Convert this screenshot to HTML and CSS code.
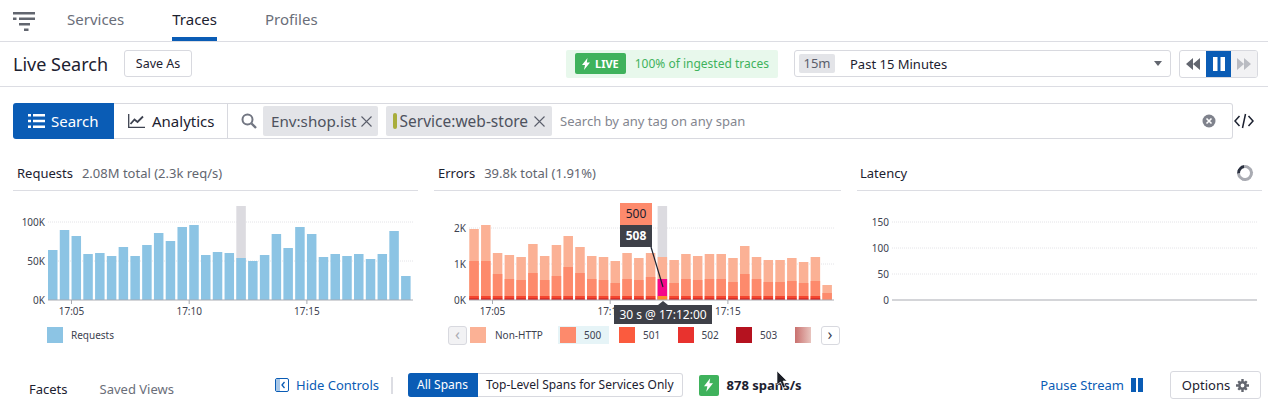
FILE: index.html
```html
<!DOCTYPE html>
<html lang="en">
<head>
  <meta charset="UTF-8">
  <title>Traces - Live Search</title>
  <link rel="stylesheet" href="styles.css">
</head>
<body>

  <nav class="tabs">
    <svg class="logo" width="22" height="20" viewBox="0 0 22 20">
      <rect x="0" y="0" width="22" height="2.5"/>
      <rect x="0" y="5.5" width="3.5" height="2.5"/>
      <rect x="6" y="5.5" width="16" height="2.5"/>
      <rect x="6" y="11" width="11" height="2.5"/>
      <rect x="11" y="16.5" width="4.5" height="2.5"/>
    </svg>
    <a class="tab">Services</a>
    <a class="tab active">Traces</a>
    <a class="tab">Profiles</a>
  </nav>

  <div class="toolbar">
    <h1>Live Search</h1>
    <button class="btn save">Save As</button>
    <div class="live">
      <span class="live-badge">
        <svg width="8" height="12" viewBox="0 0 8 12"><path d="M5.500 0 0 7h3l-1 5 6-7.500H4.800z"/></svg>
        LIVE
      </span>
      <span>100% of ingested traces</span>
    </div>
    <div class="timepicker">
      <span class="range">15m</span>
      <span class="range-name">Past 15 Minutes</span>
      <span class="caret"></span>
    </div>
    <div class="player">
      <span class="pl">
        <svg width="14" height="12" viewBox="0 0 14 12"><path d="M7 0v12L0 6zM14 0v12L7 6z"/></svg>
      </span>
      <span class="pl on">
        <svg width="12" height="14" viewBox="0 0 12 14"><rect width="4.500" height="14"/><rect x="7.500" width="4.500" height="14"/></svg>
      </span>
      <span class="pl off">
        <svg width="14" height="12" viewBox="0 0 14 12"><path d="M0 0v12l7-6zM7 0v12l7-6z"/></svg>
      </span>
    </div>
  </div>

  <div class="searchrow">
    <button class="mode on">
      <svg width="17" height="14" viewBox="0 0 17 14"><path d="M0 0h3v2.500H0zM5 0h12v2.500H5zM0 5.700h3v2.500H0zM5 5.700h12v2.500H5zM0 11.500h3V14H0zM5 11.500h12V14H5z"/></svg>
      Search
    </button>
    <button class="mode">
      <svg width="17" height="14" viewBox="0 0 17 14"><path d="M.7 0v13.300H17" fill="none" stroke="#3d4250" stroke-width="1.300"/><path d="m2.500 10 4-4.500 3 2.500L15 2.500" fill="none" stroke="#3d4250" stroke-width="1.800"/></svg>
      Analytics
    </button>
    <div class="searchbar">
      <svg class="mag" width="16" height="16" viewBox="0 0 16 16"><circle cx="6.500" cy="6.500" r="5" fill="none" stroke="#727682" stroke-width="2"/><path d="m10.500 10.500 4.500 4.500" stroke="#727682" stroke-width="2.400"/></svg>
      <span class="tag">Env:shop.ist <svg class="x" width="11" height="11" viewBox="0 0 11 11"><path d="m.5.500 10 10M10.500.500l-10 10" stroke="#5a5e6b" stroke-width="1.100"/></svg></span>
      <span class="tag svc"><i class="pill"></i>Service:web-store <svg class="x" width="11" height="11" viewBox="0 0 11 11"><path d="m.5.500 10 10M10.500.500l-10 10" stroke="#5a5e6b" stroke-width="1.100"/></svg></span>
      <span class="placeholder">Search by any tag on any span</span>
      <svg width="14" height="14" viewBox="0 0 14 14"><circle cx="7" cy="7" r="6.500" fill="#7f828c"/><path d="m4.500 4.500 5 5M9.500 4.500l-5 5" stroke="#fff" stroke-width="1.600"/></svg>
    </div>
    <svg class="code" width="20" height="16" viewBox="0 0 20 16"><path d="M5.500 3 1 8l4.500 5M14.500 3 19 8l-4.500 5M11.500 1l-3 14" fill="none" stroke="#1c2130" stroke-width="1.500"/></svg>
  </div>

  <section class="charts">
    <div class="panel">
      <div class="panel-title"><b>Requests</b><span>2.08M total (2.3k req/s)</span></div>
      <svg class="chart" id="requests" width="405" height="130"></svg>
      <div class="legend">
        <span class="leg"><i class="sw" style="background:#8cc4e4"></i>Requests</span>
      </div>
    </div>

    <div class="panel errors">
      <div class="panel-title"><b>Errors</b><span>39.8k total (1.91%)</span></div>
      <svg class="chart" id="errors" width="407" height="130"></svg>
      <div class="hover-label">
        <span class="hl-a">500</span>
        <span class="hl-b">508</span>
      </div>
      <div class="hover-time">30 s @ 17:12:00</div>
      <div class="legend err-legend">
        <span class="arrow dim">&#8249;</span>
        <span class="leg first"><i class="sw" style="background:#fbb195"></i>Non-HTTP</span>
        <span class="leg sel"><i class="sw" style="background:#fd8a6c"></i>500</span>
        <span class="leg"><i class="sw" style="background:#fb5b3e"></i>501</span>
        <span class="leg"><i class="sw" style="background:#e8322e"></i>502</span>
        <span class="leg"><i class="sw" style="background:#b5121f"></i>503</span>
        <span class="leg last"><i class="sw fade"></i></span>
        <span class="arrow">&#8250;</span>
      </div>
    </div>

    <div class="panel latency">
      <div class="panel-title"><b>Latency</b><i class="spinner"></i></div>
      <svg class="chart" id="latency" width="405" height="130"></svg>
    </div>
  </section>

  <div class="bottom">
    <div class="facets">
      <span class="f-on">Facets</span>
      <span>Saved Views</span>
    </div>
    <a class="link hide">
      <svg width="14" height="14" viewBox="0 0 14 14"><rect x=".5" y=".5" width="13" height="13" rx="1.500" fill="none" stroke="#0a5cb5"/><rect x="1" y="1" width="4" height="12" fill="#a9c8e8"/><path d="M9.500 4 7 7l2.500 3" fill="none" stroke="#0a5cb5" stroke-width="1.300"/></svg>
      Hide Controls
    </a>
    <i class="sep"></i>
    <div class="spans">
      <span class="sp on">All Spans</span>
      <span class="sp">Top-Level Spans for Services Only</span>
    </div>
    <span class="bolt">
      <svg width="9" height="14" viewBox="0 0 8 12"><path d="M5.500 0 0 7h3l-1 5 6-7.500H4.800z"/></svg>
    </span>
    <b class="rate">878 spans/s</b>
    <a class="link pause">
      Pause Stream
      <svg width="12" height="14" viewBox="0 0 12 14"><rect width="5" height="14"/><rect x="7" width="5" height="14"/></svg>
    </a>
    <button class="btn options">
      Options
      <svg width="13" height="13" viewBox="0 0 13 13"><circle cx="6.500" cy="6.500" r="3.200" fill="none" stroke="#62666f" stroke-width="2.600"/><path d="M5.300 0h2.400v2.500H5.300zM5.300 10.500h2.400V13H5.300zM0 5.300h2.500v2.400H0zM10.500 5.300H13v2.400h-2.500zM1.400 3.100 3.100 1.400l1.500 1.500-1.700 1.700zM9.900 1.400l1.700 1.700-1.500 1.500-1.700-1.700zM1.400 9.900l1.700 1.700 1.500-1.500-1.700-1.700zM11.600 9.900l-1.700 1.700-1.500-1.500 1.700-1.700z" fill="#62666f"/></svg>
    </button>
  </div>

  <svg class="cursor" width="12" height="18" viewBox="0 0 12 18"><path d="M1 0v14l3.500-3 2.500 6 2.500-1-2.500-6H11z" fill="#1b1e26" stroke="#fff" stroke-width=".6"/></svg>

  <script src="script.js"></script>
</body>
</html>
```

FILE: styles.css
```css
* {
  box-sizing: border-box;
}
body {
  margin: 0;
  height: 402px;
  overflow: hidden;
  position: relative;
  font-family: "Noto Sans", Arial, sans-serif;
  font-size: 13px;
  color: #1c2130;
  background: #fff;
}
button {
  font-family: inherit;
}
svg {
  display: block;
  flex: none;
}

/* top tabs */
.tabs {
  display: flex;
  height: 42px;
  padding-left: 13px;
  border-bottom: 1px solid #dcdde3;
}
.logo {
  margin-top: 12px;
  margin-right: 32px;
  fill: #62666f;
}
.tab {
  height: 41px;
  margin-right: 48px;
  padding: 9px 0 0;
  font-size: 15px;
  line-height: 20px;
  color: #6a6e79;
}
.tab.active {
  color: #1c2130;
  border-bottom: 4px solid #0a5cb5;
}

/* live search row */
.toolbar {
  display: flex;
  align-items: center;
  height: 45px;
  padding: 0 10px 1px 13px;
  border-bottom: 1px solid #dcdde3;
}
h1 {
  margin: 0 16px 0 0;
  font-size: 18px;
  font-weight: 400;
}
.btn {
  height: 27px;
  background: #fff;
  border: 1px solid #d8d9df;
  border-radius: 3px;
  font-size: 12.5px;
  color: #1c2130;
}
.save {
  width: 68px;
  padding: 0;
}
.live {
  display: flex;
  align-items: center;
  gap: 9px;
  height: 28px;
  margin-left: auto;
  padding: 0 9px;
  width: 212px;
  background: #e8f8ec;
  border-radius: 2px;
  font-size: 12px;
  color: #3fb25c;
  white-space: nowrap;
}
.live-badge {
  display: flex;
  align-items: center;
  gap: 5px;
  height: 21px;
  padding: 0 6px 0 7px;
  width: 53px;
  background: #3fb25c;
  border-radius: 2px;
  font-size: 11px;
  font-weight: 700;
  color: #fff;
}
.live-badge svg {
  fill: #fff;
}
.timepicker {
  display: flex;
  align-items: center;
  width: 377px;
  height: 27px;
  margin-left: 16px;
  padding: 0 8px 0 4px;
  border: 1px solid #d8d9df;
  border-radius: 3px;
  font-size: 13px;
}
.range {
  width: 36px;
  height: 19px;
  margin-right: 15px;
  background: #e3e4e8;
  border-radius: 2px;
  text-align: center;
  line-height: 19px;
  color: #5a5e6b;
}
.caret {
  width: 0;
  height: 0;
  margin-left: auto;
  border-left: 4.5px solid transparent;
  border-right: 4.5px solid transparent;
  border-top: 5px solid #62666f;
}
.player {
  display: flex;
  width: 79px;
  height: 28px;
  margin-left: 8px;
  border: 1px solid #d8d9df;
  border-radius: 3px;
  overflow: hidden;
}
.pl {
  flex: 1;
  display: flex;
  align-items: center;
  justify-content: center;
  fill: #62666f;
}
.pl.on {
  background: #0a5cb5;
  fill: #fff;
}
.pl.off {
  background: #f2f2f4;
  fill: #b9bbc2;
}

/* search row */
.searchrow {
  display: flex;
  align-items: center;
  height: 36px;
  margin: 16px 0 0 13px;
}
.mode {
  display: flex;
  align-items: center;
  gap: 7px;
  width: 114px;
  height: 36px;
  padding: 0 13px 0 14px;
  background: #fff;
  border: 1px solid #d8d9df;
  border-left: 0;
  font-size: 15px;
  color: #1c2130;
  white-space: nowrap;
}
.mode.on {
  width: 101px;
  gap: 6px;
  padding-left: 15px;
  background: #0a5cb5;
  border: 0;
  border-radius: 3px 0 0 3px;
  color: #fff;
  fill: #fff;
}
.searchbar {
  display: flex;
  align-items: center;
  width: 1005px;
  height: 36px;
  padding: 0 16px 0 13px;
  border: 1px solid #d8d9df;
  border-left: 0;
  border-radius: 0 3px 3px 0;
}
.mag {
  margin-right: 6px;
}
.tag {
  display: flex;
  align-items: center;
  gap: 4px;
  height: 30px;
  margin-right: 8px;
  padding: 0 6px 0 8px;
  background: #e3e4e8;
  border-radius: 2px;
  font-size: 15.2px;
  color: #4e525e;
  white-space: nowrap;
}
.tag.svc {
  font-size: 15.5px;
  padding: 0 7px;
}
.svc .x {
  margin-left: 2px;
}
.pill {
  width: 4px;
  height: 16px;
  margin-right: -1px;
  background: #a8ad3c;
  border-radius: 2px;
}
.placeholder {
  flex: 1;
  padding-bottom: 1px;
  color: #83868f;
}
.code {
  margin-left: 1px;
}

/* charts */
.charts {
  display: flex;
  gap: 16px;
  margin: 17px 7px 0 13px;
}
.panel {
  position: relative;
  flex: 1;
}
.panel-title {
  display: flex;
  align-items: center;
  gap: 9px;
  height: 35px;
  padding: 0 9px 0 4px;
  border-bottom: 1px solid #dcdde3;
  font-size: 13px;
  color: #62666f;
}
.latency .panel-title {
  padding-left: 3px;
}
.panel-title b {
  font-weight: 400;
  color: #1c2130;
}
.spinner {
  width: 16px;
  height: 16px;
  margin-left: auto;
  border: 3px solid #a9abb2;
  border-top-color: #2a3040;
  border-radius: 50%;
  transform: rotate(-50deg);
}
.chart text {
  font-family: "Noto Sans", Arial, sans-serif;
  font-size: 10px;
  fill: #3d4250;
}
.grid {
  stroke: #e4e4e8;
  stroke-dasharray: 1 1;
}
.axis {
  stroke: #a9abb2;
}
.legend {
  display: flex;
  align-items: center;
  height: 20px;
  margin-top: 4px;
  padding-left: 34px;
  font-size: 10px;
  color: #3d4250;
}
.leg {
  display: flex;
  flex: none;
  align-items: center;
  gap: 8px;
  height: 18px;
  white-space: nowrap;
}
.sw {
  flex: none;
  width: 16px;
  height: 16px;
}
.err-legend {
  padding-left: 14px;
}
.err-legend .leg {
  width: 58.5px;
}
.err-legend .first {
  width: 88px;
  margin-left: 3px;
  gap: 9px;
}
.err-legend .sel {
  width: 51px;
  margin-right: 10px;
  padding-left: 2px;
  background: #e6f4f7;
}
.err-legend .last {
  width: 26px;
}
.sw.fade {
  background: linear-gradient(90deg, #c9706e, #e8c4be);
}
.arrow {
  flex: none;
  width: 19px;
  height: 19px;
  border: 1px solid #d8d9df;
  border-radius: 3px;
  text-align: center;
  font-size: 16px;
  line-height: 15px;
  color: #3d4250;
}
.arrow.dim {
  background: #f2f2f4;
  color: #a9abb2;
}

/* things laid over the errors chart */
.hover-label {
  position: absolute;
  left: 186px;
  top: 47px;
  width: 32px;
  font-size: 12px;
  text-align: center;
  line-height: 22px;
}
.hl-a,
.hl-b {
  display: block;
  height: 22px;
  background: #fd8a6c;
}
.hl-b {
  background: #3e4048;
  color: #fff;
  font-weight: 700;
}
.hover-time {
  position: absolute;
  left: 180px;
  top: 149px;
  width: 98px;
  height: 19px;
  background: #3e4048;
  color: #fff;
  font-size: 12px;
  line-height: 19px;
  text-align: center;
}
.hover-time::before {
  content: "";
  position: absolute;
  left: 44px;
  top: -4px;
  border-left: 5px solid transparent;
  border-right: 5px solid transparent;
  border-bottom: 4px solid #3e4048;
}

/* bottom bar */
.bottom {
  display: flex;
  align-items: center;
  height: 30px;
  margin-top: 25px;
  padding: 0 7px 0 29px;
}
.facets {
  display: flex;
  gap: 32px;
  width: 246px;
  padding-top: 8px;
  font-size: 13px;
  color: #6a6e79;
}
.f-on {
  color: #1c2130;
}
.link {
  display: flex;
  align-items: center;
  gap: 7px;
  color: #0a5cb5;
  white-space: nowrap;
}
.sep {
  width: 2px;
  height: 17px;
  margin: 0 15px 0 12px;
  background: #dcdde3;
}
.spans {
  display: flex;
  height: 24px;
  font-size: 12px;
  line-height: 22px;
}
.sp {
  padding: 0 8px;
  border: 1px solid #d8d9df;
  border-left: 0;
  border-radius: 0 3px 3px 0;
  white-space: nowrap;
}
.sp.on {
  padding: 0 9px;
  background: #0a5cb5;
  border-color: #0a5cb5;
  border-radius: 3px 0 0 3px;
  color: #fff;
}
.bolt {
  display: flex;
  align-items: center;
  justify-content: center;
  width: 20px;
  height: 21px;
  margin: 0 8px 0 16px;
  background: #3fb25c;
  border-radius: 2px;
  fill: #fff;
}
.rate {
  font-size: 13px;
}
.pause {
  margin-left: auto;
  fill: #0a5cb5;
}
.options {
  display: flex;
  align-items: center;
  justify-content: center;
  gap: 6px;
  width: 91px;
  height: 28px;
  margin-left: 27px;
  padding: 0;
  font-size: 13px;
}

.cursor {
  position: absolute;
  left: 776px;
  top: 371px;
}
```

FILE: script.js
```js
const PITCH = 11.77;
const BAR = 9.5;
const BASE = 109;

const reqHeights = [50, 70, 64, 46, 47, 44, 53, 44, 55, 67, 59, 73, 75, 45, 48, 47, 42, 39, 45, 66, 52, 73, 66, 43, 46, 44, 46, 41, 46, 69, 24];
const errTotal = [71, 75, 47, 45, 43, 56, 44, 55, 64, 53, 44, 43, 39, 47, 42, 47, 43, 40, 46, 44, 46, 46, 42, 54, 43, 40, 40, 42, 38, 43, 15];
const err500 = [39, 39, 26, 21, 20, 27, 20, 24, 33, 27, 21, 20, 17, 21, 20, 23, 21, 17, 21, 20, 21, 21, 18, 26, 21, 18, 18, 19, 17, 19, 7];

function gridLine(x1, x2, y, label, cls) {
  return '<line class="' + (cls || 'grid') + '" x1="' + x1 + '" x2="' + x2 + '" y1="' + y + '" y2="' + y + '"/>' +
    '<text x="' + (x1 - 3) + '" y="' + (y + 4) + '" text-anchor="end">' + label + '</text>';
}

function rect(x, top, h, fill) {
  return '<rect x="' + x.toFixed(2) + '" y="' + top + '" width="' + BAR + '" height="' + h + '" fill="' + fill + '"/>';
}

function timeTicks(x0) {
  let s = '';
  ['17:05', '17:10', '17:15'].forEach(function (t, i) {
    const x = x0 + i * 117.7;
    s += '<line class="axis" x1="' + x + '" x2="' + x + '" y1="' + BASE + '" y2="' + (BASE + 4) + '"/>';
    s += '<text x="' + x + '" y="' + (BASE + 15) + '" text-anchor="middle">' + t + '</text>';
  });
  return s;
}

function drawRequests() {
  let s = gridLine(35, 400, 31, '100K') + gridLine(35, 400, 70, '50K');
  reqHeights.forEach(function (h, i) {
    const x = 35 + i * PITCH;
    if (i == 16) s += rect(x, 15, BASE - 15, '#dcdbe0');
    s += rect(x, BASE - h, h, '#8cc4e4');
  });
  s += gridLine(35, 400, BASE, '0K', 'axis') + timeTicks(58.5);
  document.getElementById('requests').innerHTML = s;
}

function drawErrors() {
  let s = gridLine(35, 400, 37, '2K') + gridLine(35, 400, 73, '1K');
  errTotal.forEach(function (h, i) {
    const x = 35.3 + i * PITCH;
    const mid = err500[i];
    if (i == 16) s += rect(x, 15, BASE - 15, '#dcdbe0');
    s += rect(x, BASE - h, h, '#fbb195');
    s += rect(x, BASE - mid, mid, i == 16 ? '#f5078a' : '#fd8a6c');
    if (i < 30) {
      s += rect(x, BASE - 4, 4, i == 16 ? '#fd8a2c' : '#f4452e');
      if (i != 16) s += rect(x, BASE - 1.5, 1.5, '#c41a20');
    }
  });
  s += gridLine(35, 400, BASE, '0K', 'axis') + timeTicks(58.5);
  // leader from the hover label down to the pink bar
  s += '<line x1="217" y1="56" x2="229" y2="96" stroke="#1c2130" stroke-width="1.200"/>';
  document.getElementById('errors').innerHTML = s;
}

function drawLatency() {
  let s = gridLine(35, 400, 31, '150') + gridLine(35, 400, 57, '100') + gridLine(35, 400, 83, '50');
  s += gridLine(35, 400, BASE, '0', 'axis');
  document.getElementById('latency').innerHTML = s;
}

drawRequests();
drawErrors();
drawLatency();
```
